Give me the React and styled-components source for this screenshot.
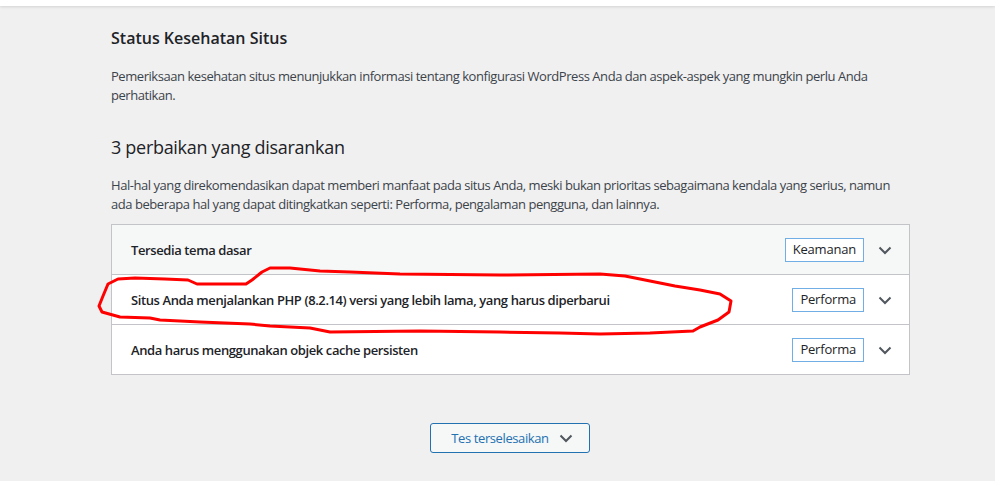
import React from 'react'
import styled, {createGlobalStyle} from 'styled-components'

const GlobalStyle = createGlobalStyle`
  body {
    margin: 0;
    background: #f0f0f1;
    font-family: "Open Sans", "Noto Sans", sans-serif;
    color: #1d2327;
  }
`

const issues = [
  {label: 'Tersedia tema dasar', badge: 'Keamanan', hover: true},
  {label: 'Situs Anda menjalankan PHP (8.2.14) versi yang lebih lama, yang harus diperbarui', badge: 'Performa'},
  {label: 'Anda harus menggunakan objek cache persisten', badge: 'Performa'},
]

const Chevron = ({color = '#50575e'}) => (
  <svg width="16" height="16" viewBox="0 0 16 16">
    <path d="M2.5 5.5 L8 11 L13.5 5.5" fill="none" stroke={color} strokeWidth="2" />
  </svg>
)

const App = () => (
  <Page>
    <GlobalStyle />
    <TopBar />
    <Content>
      <Title>Status Kesehatan Situs</Title>
      <Para>
        Pemeriksaan kesehatan situs menunjukkan informasi tentang konfigurasi WordPress Anda dan aspek-aspek yang mungkin perlu Anda perhatikan.
      </Para>
      <SubTitle>3 perbaikan yang disarankan</SubTitle>
      <Para $tight>
        Hal-hal yang direkomendasikan dapat memberi manfaat pada situs Anda, meski bukan prioritas sebagaimana kendala yang serius, namun ada beberapa hal yang dapat ditingkatkan seperti: Performa, pengalaman pengguna, dan lainnya.
      </Para>
      <Accordion>
        {issues.map((it) => (
          <Row key={it.label} $hover={it.hover}>
            <RowLabel>{it.label}</RowLabel>
            <Badge>{it.badge}</Badge>
            <Chevron />
          </Row>
        ))}
      </Accordion>
      <ButtonWrap>
        <ToggleButton>
          Tes terselesaikan
          <Chevron />
        </ToggleButton>
      </ButtonWrap>
    </Content>
    <Scribble width="995" height="481" viewBox="0 0 995 481">
      <path
        d="M103 296 L108 284 L118 279 L135 278 L165 279 L188 280 L197 284 L218 284 L246 284 L252 280 L262 272 L270 268 L290 268 L320 271 L350 272 L400 274 L500 275 L600 274 L625 276 L650 281 L675 286 L700 290 L720 294 L731 301 L729 312 L718 320 L700 327 L693 331 L650 333 L600 334 L560 333 L500 332 L420 331 L330 332 L310 328 L270 326 L250 324 L200 322 L160 320 L150 318 L120 317 L102 312 L99 306 Z"
        fill="none"
        stroke="#ff0000"
        strokeWidth="3"
        strokeLinejoin="round"
      />
    </Scribble>
  </Page>
)

export default App

const Page = styled.div`
  position: relative;
  width: 995px;
  height: 481px;
  overflow: hidden;
`

const TopBar = styled.div`
  height: 6px;
  background: #fff;
  box-shadow: 0 1px 3px rgba(0, 0, 0, 0.12);
`

const Content = styled.div`
  width: 799px;
  margin: 0 0 0 111px;
  padding-top: 22px;
`

const Title = styled.h1`
  margin: 0;
  font-size: 16px;
  font-weight: 600;
  line-height: 20px;
`

const Para = styled.p`
  margin: ${(p) => (p.$tight ? '17px 0 10px' : '19px 0 0')};
  font-size: 13px;
  line-height: 19px;
  color: #3c434a;
  letter-spacing: -0.45px;
`

const SubTitle = styled.h2`
  margin: 30px 0 0;
  font-size: 18px;
  font-weight: 400;
  line-height: 24px;
  letter-spacing: -0.3px;
`

const Accordion = styled.div`
  border: 1px solid #c3c4c7;
  background: #fff;
`

const Row = styled.div`
  display: flex;
  align-items: center;
  height: 49px;
  padding: 0 16px 0 19px;
  background: ${(p) => (p.$hover ? '#f6f7f7' : '#fff')};
  & + & {
    border-top: 1px solid #c3c4c7;
  }
  svg {
    margin-left: 13px;
  }
`

const RowLabel = styled.span`
  flex: 1;
  font-size: 13px;
  font-weight: 600;
  letter-spacing: -0.4px;
`

const Badge = styled.span`
  border: 1px solid #72aee6;
  padding: 2px 7px 3px;
  font-size: 13px;
  line-height: 17px;
  background: #fff;
  letter-spacing: -0.2px;
`

const ButtonWrap = styled.div`
  display: flex;
  justify-content: center;
  padding-top: 48px;
  padding-right: 1px;
`

const ToggleButton = styled.button`
  display: flex;
  align-items: center;
  gap: 9px;
  height: 30px;
  padding: 0 15px 0 20px;
  border: 1px solid #2271b1;
  border-radius: 3px;
  background: #f6f7f7;
  color: #2271b1;
  font-family: inherit;
  font-size: 13px;
  letter-spacing: -0.4px;
`

const Scribble = styled.svg`
  position: absolute;
  left: 0;
  top: 0;
  pointer-events: none;
`
